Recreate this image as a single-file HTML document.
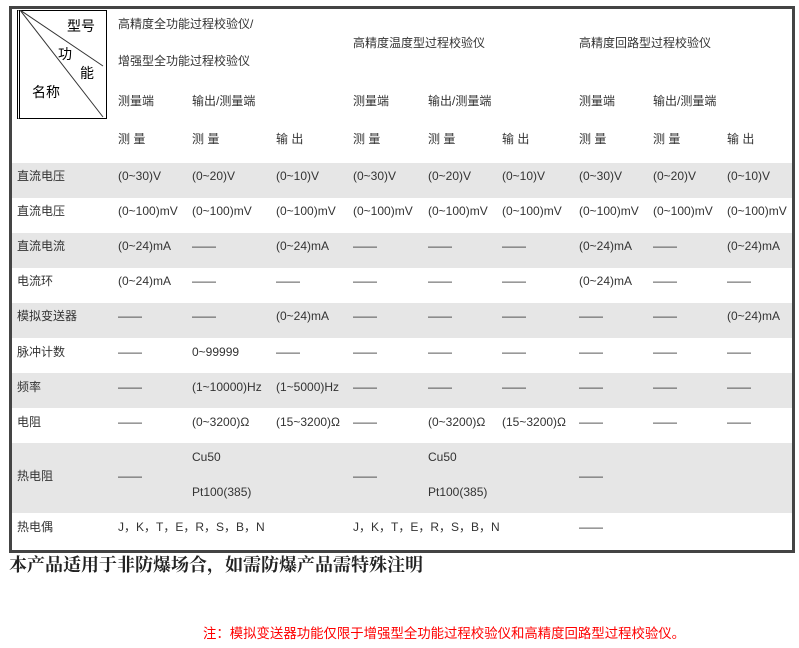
<!DOCTYPE html>
<html><head><meta charset="utf-8">
<style>
body{margin:0;width:799px;height:648px;background:#fff;position:relative;overflow:hidden;font-family:"Liberation Sans","Noto Sans CJK SC",sans-serif;font-size:12px;color:#333}
.box{position:absolute;left:9px;top:6px;width:780px;height:541px;border:3px solid #444}
.g{position:absolute;left:12px;width:780px;background:#e6e6e6}
.t{position:absolute;white-space:nowrap;line-height:14px}
.diag{position:absolute;left:17px;top:10px;width:86px;height:107px;border:1px solid #000;border-left:3px double #000}
</style></head><body>
<div class="box"></div>
<div class="g" style="top:163px;height:35px"></div>
<div class="g" style="top:233px;height:35px"></div>
<div class="g" style="top:303px;height:35px"></div>
<div class="g" style="top:373px;height:35px"></div>
<div class="g" style="top:443px;height:70px"></div>
<div class="diag"></div>
<svg style="position:absolute;left:20px;top:10px" width="86" height="110"><line x1="0" y1="0" x2="83" y2="56" stroke="#333"/><line x1="0" y1="0" x2="83" y2="107" stroke="#333"/></svg>
<div class="t" style="left:67px;top:19px;font-size:14px;color:#000">型号</div>
<div class="t" style="left:58px;top:47px;font-size:14px;color:#000">功</div>
<div class="t" style="left:80px;top:66px;font-size:14px;color:#000">能</div>
<div class="t" style="left:32px;top:85px;font-size:14px;color:#000">名称</div>
<div class="t" style="left:118px;top:17px">高精度全功能过程校验仪/</div>
<div class="t" style="left:118px;top:54px">增强型全功能过程校验仪</div>
<div class="t" style="left:353px;top:36px">高精度温度型过程校验仪</div>
<div class="t" style="left:579px;top:36px">高精度回路型过程校验仪</div>
<div class="t" style="left:118px;top:94px">测量端</div><div class="t" style="left:192px;top:94px">输出/测量端</div>
<div class="t" style="left:353px;top:94px">测量端</div><div class="t" style="left:428px;top:94px">输出/测量端</div>
<div class="t" style="left:579px;top:94px">测量端</div><div class="t" style="left:653px;top:94px">输出/测量端</div>
<div class="t" style="left:118px;top:132px">测 量</div><div class="t" style="left:192px;top:132px">测 量</div><div class="t" style="left:276px;top:132px">输 出</div>
<div class="t" style="left:353px;top:132px">测 量</div><div class="t" style="left:428px;top:132px">测 量</div><div class="t" style="left:502px;top:132px">输 出</div>
<div class="t" style="left:579px;top:132px">测 量</div><div class="t" style="left:653px;top:132px">测 量</div><div class="t" style="left:727px;top:132px">输 出</div>

<div class="t" style="left:17px;top:169px">直流电压</div>
<div class="t" style="left:118px;top:169px">(0~30)V</div><div class="t" style="left:192px;top:169px">(0~20)V</div><div class="t" style="left:276px;top:169px">(0~10)V</div>
<div class="t" style="left:353px;top:169px">(0~30)V</div><div class="t" style="left:428px;top:169px">(0~20)V</div><div class="t" style="left:502px;top:169px">(0~10)V</div>
<div class="t" style="left:579px;top:169px">(0~30)V</div><div class="t" style="left:653px;top:169px">(0~20)V</div><div class="t" style="left:727px;top:169px">(0~10)V</div>

<div class="t" style="left:17px;top:204px">直流电压</div>
<div class="t" style="left:118px;top:204px">(0~100)mV</div><div class="t" style="left:192px;top:204px">(0~100)mV</div><div class="t" style="left:276px;top:204px">(0~100)mV</div>
<div class="t" style="left:353px;top:204px">(0~100)mV</div><div class="t" style="left:428px;top:204px">(0~100)mV</div><div class="t" style="left:502px;top:204px">(0~100)mV</div>
<div class="t" style="left:579px;top:204px">(0~100)mV</div><div class="t" style="left:653px;top:204px">(0~100)mV</div><div class="t" style="left:727px;top:204px">(0~100)mV</div>

<div class="t" style="left:17px;top:239px">直流电流</div>
<div class="t" style="left:118px;top:239px">(0~24)mA</div><div class="t" style="left:192px;top:239px">——</div><div class="t" style="left:276px;top:239px">(0~24)mA</div>
<div class="t" style="left:353px;top:239px">——</div><div class="t" style="left:428px;top:239px">——</div><div class="t" style="left:502px;top:239px">——</div>
<div class="t" style="left:579px;top:239px">(0~24)mA</div><div class="t" style="left:653px;top:239px">——</div><div class="t" style="left:727px;top:239px">(0~24)mA</div>

<div class="t" style="left:17px;top:274px">电流环</div>
<div class="t" style="left:118px;top:274px">(0~24)mA</div><div class="t" style="left:192px;top:274px">——</div><div class="t" style="left:276px;top:274px">——</div>
<div class="t" style="left:353px;top:274px">——</div><div class="t" style="left:428px;top:274px">——</div><div class="t" style="left:502px;top:274px">——</div>
<div class="t" style="left:579px;top:274px">(0~24)mA</div><div class="t" style="left:653px;top:274px">——</div><div class="t" style="left:727px;top:274px">——</div>

<div class="t" style="left:17px;top:309px">模拟变送器</div>
<div class="t" style="left:118px;top:309px">——</div><div class="t" style="left:192px;top:309px">——</div><div class="t" style="left:276px;top:309px">(0~24)mA</div>
<div class="t" style="left:353px;top:309px">——</div><div class="t" style="left:428px;top:309px">——</div><div class="t" style="left:502px;top:309px">——</div>
<div class="t" style="left:579px;top:309px">——</div><div class="t" style="left:653px;top:309px">——</div><div class="t" style="left:727px;top:309px">(0~24)mA</div>

<div class="t" style="left:17px;top:345px">脉冲计数</div>
<div class="t" style="left:118px;top:345px">——</div><div class="t" style="left:192px;top:345px">0~99999</div><div class="t" style="left:276px;top:345px">——</div>
<div class="t" style="left:353px;top:345px">——</div><div class="t" style="left:428px;top:345px">——</div><div class="t" style="left:502px;top:345px">——</div>
<div class="t" style="left:579px;top:345px">——</div><div class="t" style="left:653px;top:345px">——</div><div class="t" style="left:727px;top:345px">——</div>

<div class="t" style="left:17px;top:380px">频率</div>
<div class="t" style="left:118px;top:380px">——</div><div class="t" style="left:192px;top:380px">(1~10000)Hz</div><div class="t" style="left:276px;top:380px">(1~5000)Hz</div>
<div class="t" style="left:353px;top:380px">——</div><div class="t" style="left:428px;top:380px">——</div><div class="t" style="left:502px;top:380px">——</div>
<div class="t" style="left:579px;top:380px">——</div><div class="t" style="left:653px;top:380px">——</div><div class="t" style="left:727px;top:380px">——</div>

<div class="t" style="left:17px;top:415px">电阻</div>
<div class="t" style="left:118px;top:415px">——</div><div class="t" style="left:192px;top:415px">(0~3200)Ω</div><div class="t" style="left:276px;top:415px">(15~3200)Ω</div>
<div class="t" style="left:353px;top:415px">——</div><div class="t" style="left:428px;top:415px">(0~3200)Ω</div><div class="t" style="left:502px;top:415px">(15~3200)Ω</div>
<div class="t" style="left:579px;top:415px">——</div><div class="t" style="left:653px;top:415px">——</div><div class="t" style="left:727px;top:415px">——</div>

<div class="t" style="left:17px;top:469px">热电阻</div>
<div class="t" style="left:118px;top:469px">——</div>
<div class="t" style="left:192px;top:450px">Cu50</div><div class="t" style="left:192px;top:485px">Pt100(385)</div>
<div class="t" style="left:353px;top:469px">——</div>
<div class="t" style="left:428px;top:450px">Cu50</div><div class="t" style="left:428px;top:485px">Pt100(385)</div>
<div class="t" style="left:579px;top:469px">——</div>

<div class="t" style="left:17px;top:520px">热电偶</div>
<div class="t" style="left:118px;top:520px">J，K，T，E，R，S，B，N</div>
<div class="t" style="left:353px;top:520px">J，K，T，E，R，S，B，N</div>
<div class="t" style="left:579px;top:520px">——</div>

<div class="t" style="left:9px;top:555px;font-family:'Liberation Serif','Noto Serif CJK SC',serif;font-weight:bold;font-size:18px;line-height:20px;color:#222">本产品适用于非防爆场合，如需防爆产品需特殊注明</div>
<div class="t" style="left:203px;top:626px;color:#f00;font-size:13.4px;line-height:16px">注：模拟变送器功能仅限于增强型全功能过程校验仪和高精度回路型过程校验仪。</div>
</body></html>
